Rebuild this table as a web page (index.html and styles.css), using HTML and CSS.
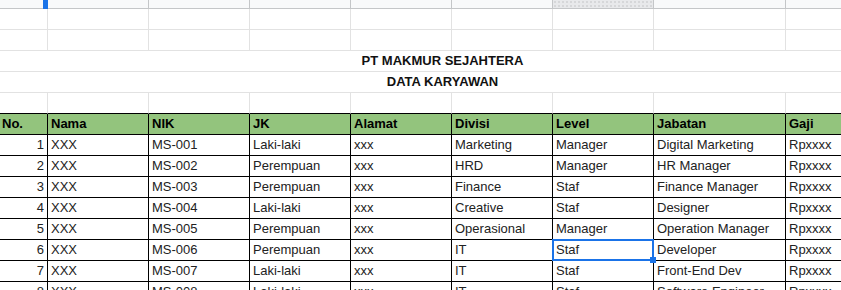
FILE: index.html
```
<!DOCTYPE html>
<html lang="id">
<head>
<meta charset="utf-8">
<title>Data Karyawan</title>
<link rel="stylesheet" href="styles.css">
</head>
<body>
<table class="sheet">
	<tr class="colhead">
		<td class="w-a cur-col"></td>
		<td class="w-std"></td>
		<td class="w-std"></td>
		<td class="w-std"></td>
		<td class="w-std"></td>
		<td class="w-std"></td>
		<td class="w-std on"></td>
		<td class="w-wide"></td>
		<td class="w-std"></td>
	</tr>
	<tr><td></td><td></td><td></td><td></td><td></td><td></td><td></td><td></td><td></td></tr>
	<tr><td></td><td></td><td></td><td></td><td></td><td></td><td></td><td></td><td></td></tr>
	<tr class="title"><td colspan="9">PT MAKMUR SEJAHTERA</td></tr>
	<tr class="title"><td colspan="9">DATA KARYAWAN</td></tr>
	<tr class="gap"><td></td><td></td><td></td><td></td><td></td><td></td><td></td><td></td><td></td></tr>
	<tr class="head">
		<td class="first">No.</td>
		<td>Nama</td>
		<td>NIK</td>
		<td>JK</td>
		<td>Alamat</td>
		<td>Divisi</td>
		<td>Level</td>
		<td>Jabatan</td>
		<td>Gaji</td>
	</tr>
	<tr class="data">
		<td class="num">1</td><td>XXX</td><td>MS-001</td><td>Laki-laki</td><td>xxx</td><td>Marketing</td><td>Manager</td><td>Digital Marketing</td><td>Rpxxxx</td>
	</tr>
	<tr class="data">
		<td class="num">2</td><td>XXX</td><td>MS-002</td><td>Perempuan</td><td>xxx</td><td>HRD</td><td>Manager</td><td>HR Manager</td><td>Rpxxxx</td>
	</tr>
	<tr class="data">
		<td class="num">3</td><td>XXX</td><td>MS-003</td><td>Perempuan</td><td>xxx</td><td>Finance</td><td>Staf</td><td>Finance Manager</td><td>Rpxxxx</td>
	</tr>
	<tr class="data">
		<td class="num">4</td><td>XXX</td><td>MS-004</td><td>Laki-laki</td><td>xxx</td><td>Creative</td><td>Staf</td><td>Designer</td><td>Rpxxxx</td>
	</tr>
	<tr class="data">
		<td class="num">5</td><td>XXX</td><td>MS-005</td><td>Perempuan</td><td>xxx</td><td>Operasional</td><td>Manager</td><td>Operation Manager</td><td>Rpxxxx</td>
	</tr>
	<tr class="data">
		<td class="num">6</td><td>XXX</td><td>MS-006</td><td>Perempuan</td><td>xxx</td><td>IT</td><td class="sel">Staf</td><td>Developer</td><td>Rpxxxx</td>
	</tr>
	<tr class="data">
		<td class="num">7</td><td>XXX</td><td>MS-007</td><td>Laki-laki</td><td>xxx</td><td>IT</td><td>Staf</td><td>Front-End Dev</td><td>Rpxxxx</td>
	</tr>
	<tr class="data">
		<td class="num">8</td><td>XXX</td><td>MS-008</td><td>Laki-laki</td><td>xxx</td><td>IT</td><td>Staf</td><td>Software Engineer</td><td>Rpxxxx</td>
	</tr>
</table>
</body>
</html>
```
FILE: styles.css
```
*{margin:0;padding:0;}
html,body{background:#fff;overflow:hidden;}
body{font-family:"Liberation Sans",Arial,sans-serif;font-size:13px;color:#222;}

.sheet{table-layout:fixed;border-collapse:separate;border-spacing:0;width:887px;}
.sheet td{box-sizing:border-box;height:21px;padding:0 3px;line-height:20px;white-space:nowrap;overflow:hidden;border-right:1px solid #e2e2e2;border-bottom:1px solid #e2e2e2;}

/* column widths come from the first row */
.w-a{width:48px;}
.w-std{width:101px;}
.w-wide{width:132px;}

/* strip of the column headers, mostly scrolled away */
.sheet .colhead td{height:9px;background:#f8f9fa;border-right-color:#c4c6c8;border-bottom-color:#c4c6c8;}
.sheet .colhead td.on{background-color:#e8e9eb;background-image:radial-gradient(#d6d7d9 0.8px,transparent 1px);background-size:4px 4px;}
.sheet .colhead td.cur-col{position:relative;overflow:visible;}
.cur-col:after{content:"";position:absolute;top:0;bottom:-1px;right:-1px;width:5px;background:#1a73e8;}

/* merged title rows */
.sheet .title td{text-align:center;font-weight:bold;color:#111;border-right:none;padding-right:5px;}

.sheet .gap td{border-bottom-color:#000;}

.sheet .head td{background:#93c47d;font-weight:bold;color:#000;border-color:#000;}
.sheet .head td.first{padding-left:2px;}

.sheet .data td{border-color:#000;}
.sheet .data td.num{text-align:right;}

/* active cell */
.sheet td.sel{position:relative;overflow:visible;}
.sel:before{content:"";position:absolute;left:-1px;top:-1px;right:-1px;bottom:-1px;border:2px solid #1a73e8;}
.sel:after{content:"";position:absolute;right:-3px;bottom:-3px;width:6px;height:6px;background:#1a73e8;}
```
